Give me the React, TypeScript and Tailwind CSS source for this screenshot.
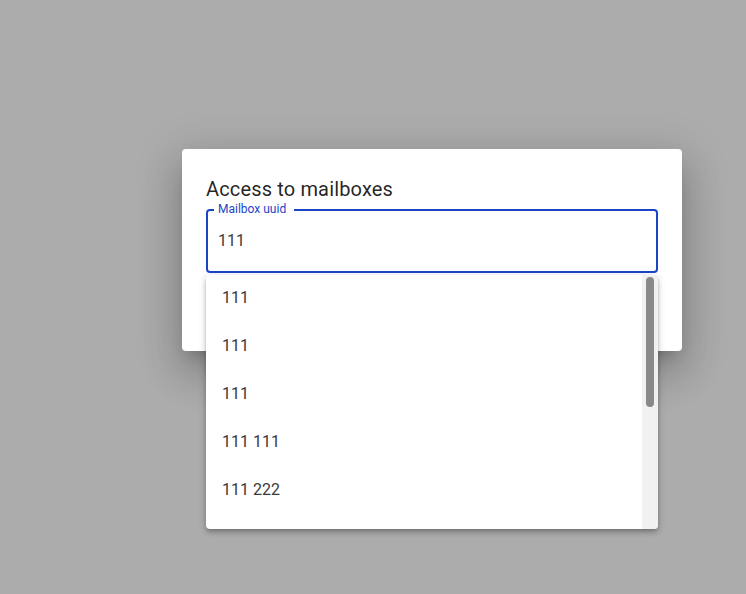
import React from 'react'

const options = ['111', '111', '111', '111 111', '111 222']

export default function App() {
  return (
    <div
      className="relative h-[594px] w-full overflow-hidden bg-[#acacac] pl-[182px] pt-[149px]"
      style={{ fontFamily: 'Roboto, "Liberation Sans", sans-serif' }}
    >
      {/* dialog */}
      <div className="h-[202px] w-[500px] rounded-[4px] bg-white px-6 pt-6 shadow-[0_11px_15px_-7px_rgba(0,0,0,0.2),0_24px_38px_3px_rgba(0,0,0,0.14),0_9px_46px_8px_rgba(0,0,0,0.12)]">
        <h2 className="h-[36px] text-[20px] leading-[32px] font-normal tracking-[0.15px] text-[rgba(0,0,0,0.87)]">
          Access to mailboxes
        </h2>
        <div className="relative h-[64px] w-[452px] rounded-[4px] border-2 border-[#1a45c9] pl-[10px]">
          <span className="absolute -top-[8px] left-[6px] bg-white pl-[4px] pr-[8px] text-[12px] leading-[12px] text-[#1a45c9]">
            Mailbox uuid
          </span>
          <div className="flex h-full items-center text-[16px] text-[#3c3c3c]">111</div>
        </div>
      </div>

      {/* autocomplete popper */}
      <div className="absolute left-[206px] top-[275px] flex h-[254px] w-[452px] overflow-hidden rounded-[4px] bg-white shadow-[0_2px_4px_-1px_rgba(0,0,0,0.2),0_4px_5px_0_rgba(0,0,0,0.14),0_1px_10px_0_rgba(0,0,0,0.12)]">
        <ul className="-mt-px flex-1">
          {options.map((o, i) => (
            <li key={i} className="flex h-12 items-center pl-4 text-[16px] text-[#3a3a3a]">
              {o}
            </li>
          ))}
        </ul>
        <div className="w-4 bg-[#f1f1f1] px-1 pt-[2px]">
          <div className="h-[130px] w-2 rounded-full bg-[#898989]" />
        </div>
      </div>
    </div>
  )
}
